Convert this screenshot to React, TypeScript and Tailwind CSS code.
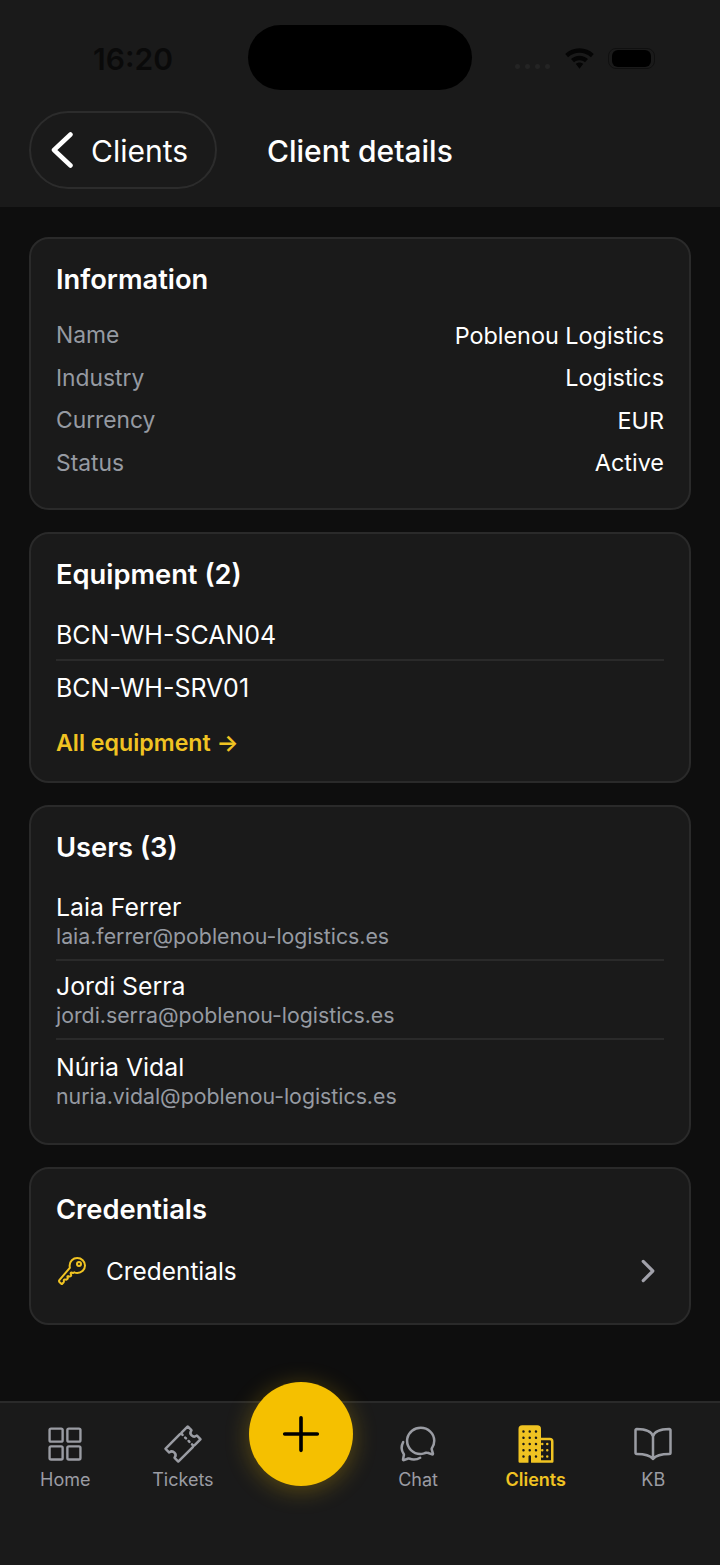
import { IoAdd, IoBookOutline, IoBusiness, IoChatbubblesOutline, IoChevronForward, IoGridOutline, IoKeyOutline, IoTicketOutline } from "react-icons/io5"

const info = [
  ["Name", "Poblenou Logistics"],
  ["Industry", "Logistics"],
  ["Currency", "EUR"],
  ["Status", "Active"],
]

const users = [
  ["Laia Ferrer", "laia.ferrer@poblenou-logistics.es"],
  ["Jordi Serra", "jordi.serra@poblenou-logistics.es"],
  ["Núria Vidal", "nuria.vidal@poblenou-logistics.es"],
]

function Card({ title, children, className }: { title: string; children: React.ReactNode; className: string }) {
  return (
    <section className={`rounded-[20px] border-2 border-[#2a2a2a] bg-[#1a1a1a] px-[25px] ${className}`}>
      <h2 className="text-[27.3px] leading-[32px] font-semibold text-white">{title}</h2>
      {children}
    </section>
  )
}

function Tab({ label, active, children }: { label: string; active?: boolean; children: React.ReactNode }) {
  return (
    <div className={`flex w-[117.6px] flex-col items-center ${active ? "text-[#f0c322]" : "text-[#9a9ca3]"}`}>
      <div className="flex h-[40px] items-center justify-center">{children}</div>
      <span className={`mt-[4px] text-[18px] leading-[24px] ${active ? "font-semibold" : ""}`}>{label}</span>
    </div>
  )
}

export default function App() {
  return (
    <div className="flex h-[1565px] w-[720px] flex-col overflow-hidden bg-[#0e0e0e] font-['Inter',sans-serif]">
      {/* Header */}
      <header className="h-[207px] shrink-0 bg-[#1a1a1a]">
        <div className="flex h-[111px] items-start">
          <span className="mt-[41px] ml-[93px] w-[82px] text-[30px] leading-[36px] font-semibold text-[#0a0a0a]">16:20</span>
          <div className="mt-[25px] ml-[73px] h-[65px] w-[224px] rounded-[33px] bg-black" />
          <div className="mt-[44px] ml-[43px] flex h-[28px] items-center">
            <div className="mt-[16px] flex gap-[5px]">
              <span className="h-[5px] w-[5px] rounded-full bg-[#242424]" />
              <span className="h-[5px] w-[5px] rounded-full bg-[#242424]" />
              <span className="h-[5px] w-[5px] rounded-full bg-[#242424]" />
              <span className="h-[5px] w-[5px] rounded-full bg-[#242424]" />
            </div>
            <svg className="ml-[15px]" width="29" height="23" viewBox="1 3 28 21" fill="#050505">
              <path d="M15 3.500C9.500 3.500 5 5.500 1.200 9.200l2.800 3C7 9.500 10.800 8 15 8s8 1.500 11 4.200l2.800-3C25 5.500 20.500 3.500 15 3.500z" />
              <path d="M15 10.800c-3.200 0-6 1.200-8.200 3.300l2.900 3c1.300-1.300 3.200-2 5.300-2s4 .7 5.300 2l2.900-3C21 12 18.200 10.800 15 10.800z" />
              <path d="M15 17.300c-1.400 0-2.600.5-3.500 1.400L15 23.500l3.500-4.800c-.9-.9-2.100-1.400-3.500-1.400z" />
            </svg>
            <div className="ml-[14px] flex h-[21px] w-[47px] items-center justify-center rounded-[8px] border border-[#101010]">
              <div className="h-[17px] w-[39px] rounded-[6px] bg-black" />
            </div>
          </div>
        </div>
        <div className="flex items-center pl-[29px]">
          <div className="flex h-[78px] w-[188px] items-center rounded-[39px] border-2 border-[#2c2c2c] pl-[20px] text-white">
            <svg width="22" height="36" viewBox="0 0 22 36" fill="none" stroke="currentColor" strokeWidth="4.500" strokeLinecap="round" strokeLinejoin="round">
              <path d="M19.500 2.500L3 18l16.500 15.500" />
            </svg>
            <span className="mt-[2px] ml-[18px] text-[30px] leading-[36px]">Clients</span>
          </div>
          <h1 className="mt-[2px] ml-[50px] text-[30px] leading-[36px] font-medium text-white">Client details</h1>
        </div>
      </header>

      {/* Cards */}
      <main className="flex flex-1 flex-col gap-[22px] px-[29px] pt-[30px]">
        <Card title="Information" className="h-[273px] pt-[25px]">
          <div className="mt-[18px] flex flex-col">
            {info.map(([label, value]) => (
              <div key={label} className="flex h-[42.500px] items-center justify-between">
                <span className="text-[22.800px] text-[#969aa2]">{label}</span>
                <span className="text-[23.400px] text-white">{value}</span>
              </div>
            ))}
          </div>
        </Card>

        <Card title="Equipment (2)" className="h-[251px] pt-[25px]">
          <div className="mt-[16px] flex h-[54px] items-center border-b-2 border-[#2a2a2a] pt-[6px] text-[25px] text-white">BCN-WH-SCAN04</div>
          <div className="flex h-[54px] items-center pt-[1px] text-[25px] text-white">BCN-WH-SRV01</div>
          <div className="mt-[12px] flex items-center text-[23.2px] leading-[32px] font-semibold text-[#f0c322]">All equipment →</div>
        </Card>

        <Card title="Users (3)" className="h-[340px] pt-[25px]">
          <div className="mt-[17px] flex flex-col">
            {users.map(([name, email], i) => (
              <div key={name} className={`flex h-[79.500px] flex-col justify-center pt-[2px] ${i < 2 ? "border-b-2 border-[#2a2a2a]" : ""}`}>
                <span className="text-[24.800px] leading-[30px] text-white">{name}</span>
                <span className="mt-[1px] text-[21.300px] leading-[27px] text-[#969aa2]">{email}</span>
              </div>
            ))}
          </div>
        </Card>

        <Card title="Credentials" className="h-[158px] pt-[25px]">
          <div className="mt-[19px] flex h-[52px] items-center text-white">
            <IoKeyOutline size={32} className="text-[#f0c322]" />
            <span className="ml-[18px] text-[24.400px]">Credentials</span>
            <IoChevronForward size={34} className="-mr-[1px] ml-auto text-[#a1a1aa]" />
          </div>
        </Card>
      </main>

      {/* Tab bar */}
      <nav className="flex h-[164px] shrink-0 items-start border-t-2 border-[#2a2a2a] bg-[#1a1a1a] pt-[21px] pl-[6.500px]">
        <Tab label="Home"><IoGridOutline size={38} /></Tab>
        <Tab label="Tickets"><IoTicketOutline size={40} /></Tab>
        <div className="flex w-[117.6px] justify-center">
          <button className="-mt-[42px] ml-[2px] flex h-[104px] w-[104px] items-center justify-center rounded-full bg-[#f5c000] text-black shadow-[0_4px_24px_rgba(245,192,0,0.3)]">
            <IoAdd size={58} />
          </button>
        </div>
        <Tab label="Chat"><IoChatbubblesOutline size={40} /></Tab>
        <Tab label="Clients" active><IoBusiness size={40} /></Tab>
        <Tab label="KB"><IoBookOutline size={40} /></Tab>
      </nav>
    </div>
  )
}
